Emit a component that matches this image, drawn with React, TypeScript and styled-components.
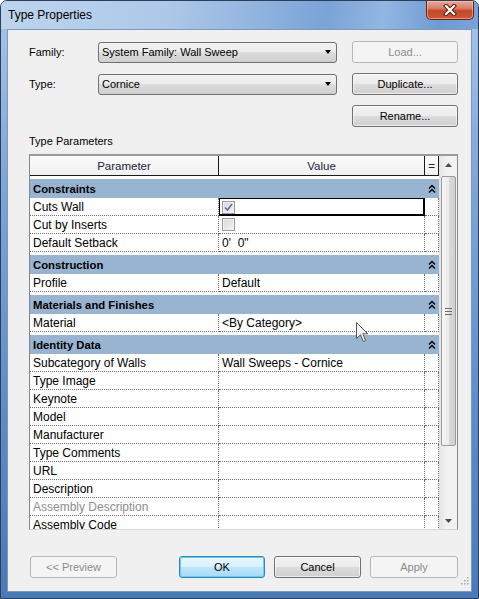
import React from "react";
import styled, { createGlobalStyle } from "styled-components";

const GlobalStyle = createGlobalStyle`
  html, body {
    margin: 0;
    padding: 0;
    background: #ffffff;
  }
  body {
    font-family: "Liberation Sans", Arial, sans-serif;
    color: #000;
  }
`;

const Window = styled.div`
  width: 479px;
  height: 599px;
  box-sizing: border-box;
  border: 1px solid #2d3f58;
  border-radius: 7px 7px 0 0;
  display: flex;
  flex-direction: column;
  overflow: hidden;
  background: linear-gradient(180deg, #a9c6e9 0%, #7fa6d8 30%, #5e8bc6 70%, #4a79b8 100%);
`;

const TitleBar = styled.div`
  height: 28px;
  flex: none;
  display: flex;
  justify-content: space-between;
  align-items: flex-start;
  padding-left: 7px;
  background: linear-gradient(
    95deg,
    #bdd4ed 0%,
    #adc8e9 35%,
    #8fb2de 55%,
    #7aa3d7 68%,
    #93b6e2 80%,
    #6f9bd3 92%,
    #7aa3d8 100%
  );
`;

const TitleText = styled.div`
  padding-top: 6px;
  font-size: 12px;
  line-height: 16px;
  color: #000;
`;

const CloseButton = styled.div`
  width: 48px;
  height: 19px;
  margin-right: 4px;
  box-sizing: border-box;
  border: 1px solid #6a2414;
  border-top: none;
  border-radius: 0 0 5px 5px;
  background: linear-gradient(180deg, #e9a898 0%, #d8806a 40%, #c2452a 55%, #cf5a3a 100%);
  box-shadow: inset 0 0 0 1px rgba(255, 210, 190, 0.5);
  display: flex;
  align-items: center;
  justify-content: center;
`;

const Client = styled.div`
  flex: 1;
  margin: 0 6px 6px 6px;
  border: 1px solid #7d98b9;
  background: #f0f0f0;
  padding: 11px 13px 0 21px;
  display: flex;
  flex-direction: column;
  position: relative;
`;

const FormGrid = styled.div`
  display: grid;
  grid-template-columns: 69px 239px 1fr;
  grid-auto-rows: 22px;
  row-gap: 10px;
  align-items: center;
  font-size: 11px;
`;

const Label = styled.div`
  font-size: 11px;
  line-height: 14px;
`;

const Combo = styled.div`
  height: 21px;
  box-sizing: border-box;
  border: 1px solid #707070;
  border-radius: 3px;
  background: linear-gradient(180deg, #f2f2f2 0%, #ebebeb 50%, #dddddd 50%, #cfcfcf 100%);
  display: flex;
  align-items: center;
  justify-content: space-between;
  padding: 0 5px 0 3px;
  font-size: 11px;
`;

const ComboArrow = styled.span`
  width: 0;
  height: 0;
  border-left: 3.5px solid transparent;
  border-right: 3.5px solid transparent;
  border-top: 4px solid #000;
`;

const Button = styled.div<{ $disabled?: boolean; $default?: boolean; $width?: number }>`
  width: ${(p) => p.$width ?? 106}px;
  height: 22px;
  box-sizing: border-box;
  justify-self: end;
  border-radius: 3px;
  display: flex;
  align-items: center;
  justify-content: center;
  font-size: 11px;
  border: 1px solid
    ${(p) => (p.$disabled ? "#b5b8bb" : p.$default ? "#3c7fb1" : "#707070")};
  color: ${(p) => (p.$disabled ? "#8c8c8c" : "#000")};
  background: ${(p) =>
    p.$disabled
      ? "#f4f4f4"
      : p.$default
      ? "linear-gradient(180deg, #eaf6fd 0%, #d9f0fc 50%, #bee6fd 50%, #a7d9f5 100%)"
      : "linear-gradient(180deg, #f2f2f2 0%, #ebebeb 50%, #dddddd 50%, #cfcfcf 100%)"};
  box-shadow: ${(p) =>
    p.$default ? "inset 0 0 0 1px #5fd0fb" : p.$disabled ? "none" : "inset 0 0 0 1px rgba(255,255,255,0.6)"};
`;

const RenameSlot = styled.div`
  grid-column: 3;
  display: flex;
  justify-content: flex-end;
`;

const SectionLabel = styled.div`
  margin-top: 7px;
  font-size: 11px;
  line-height: 14px;
`;

const Table = styled.div`
  margin-top: 6px;
  height: 376px;
  box-sizing: border-box;
  border: 1px solid #828790;
  border-top: 2px solid #9a9a9a;
  border-bottom-color: #d5d5d5;
  background: #fff;
  display: flex;
  position: relative;
`;

const Content = styled.div`
  flex: 1;
  overflow: hidden;
  font-size: 12px;
`;

const cols = "189px 206px 1fr";

const HeaderRow = styled.div`
  display: grid;
  grid-template-columns: ${cols};
  height: 20px;
  box-sizing: border-box;
  border-bottom: 1px solid #1a1a1a;
  background: linear-gradient(180deg, #fbfbfb 0%, #f0f0f0 100%);
`;

const HeaderCell = styled.div`
  display: flex;
  align-items: center;
  justify-content: center;
  border-right: 1px solid #1a1a1a;
  font-size: 11.5px;
  color: #1b2438;
`;

const GroupRow = styled.div`
  height: 22px;
  box-sizing: border-box;
  padding-top: 3px;
`;

const GroupBand = styled.div`
  height: 19px;
  display: grid;
  grid-template-columns: ${cols};
  align-items: center;
  background: #99b4d1;
`;

const GroupName = styled.div`
  grid-column: 1 / 3;
  padding-left: 3px;
  font-weight: bold;
  font-size: 11.3px;
`;

const GroupIcon = styled.div`
  display: flex;
  justify-content: center;
  padding-right: 1px;
`;

const Row = styled.div`
  display: grid;
  grid-template-columns: ${cols};
  height: 18px;
`;

const Cell = styled.div<{ $muted?: boolean; $selected?: boolean; $last?: boolean }>`
  box-sizing: border-box;
  display: flex;
  align-items: center;
  padding-left: ${(p) => (p.$last ? 0 : 3)}px;
  white-space: pre;
  overflow: hidden;
  border-bottom: 1px dotted #707070;
  border-right: 1px dotted #707070;
  color: ${(p) => (p.$muted ? "#8d8d8d" : "#000")};
  ${(p) =>
    p.$selected &&
    `
    border: 1px solid #000;
    box-shadow: inset -1px -1px 0 #000;
    padding-left: 2px;
  `}
`;

const CheckBox = styled.span`
  width: 13px;
  height: 13px;
  box-sizing: border-box;
  border: 1px solid #9a9a9a;
  background: linear-gradient(135deg, #d4d6da 0%, #f5f5f5 100%);
  box-shadow: inset 0 0 0 1px #f2f2f2;
  display: flex;
  align-items: center;
  justify-content: center;
`;

const ScrollBar = styled.div`
  width: 18px;
  flex: none;
  box-sizing: border-box;
  border-left: 1px solid #e2e2e2;
  background: linear-gradient(90deg, #e6e6e6 0%, #f2f2f2 40%, #f2f2f2 100%);
  display: flex;
  flex-direction: column;
  align-items: center;
`;

const ScrollArrow = styled.div`
  height: 17px;
  width: 100%;
  display: flex;
  align-items: center;
  justify-content: center;
`;

const Thumb = styled.div`
  width: 15px;
  height: 270px;
  margin-top: 3px;
  box-sizing: border-box;
  border: 1px solid #9b9b9b;
  border-radius: 2px;
  background: linear-gradient(90deg, #f6f6f6 0%, #ebebeb 50%, #dadada 55%, #d0d0d0 100%);
  display: flex;
  align-items: center;
  justify-content: center;
`;

const Spacer = styled.div`
  flex: 1;
`;

const Cursor = styled.div`
  position: absolute;
  left: 326px;
  top: 166px;
  pointer-events: none;
`;

const Footer = styled.div`
  margin-top: 26px;
  display: flex;
  padding-left: 1px;
`;

const FooterGap = styled.div<{ $w: number }>`
  width: ${(p) => p.$w}px;
  flex: none;
`;

const Grip = styled.div`
  position: absolute;
  right: 2px;
  bottom: 2px;
`;

type Param = {
  label: string;
  value?: string;
  check?: boolean;
  selected?: boolean;
  muted?: boolean;
};

const groups: { name: string; rows: Param[] }[] = [
  {
    name: "Constraints",
    rows: [
      { label: "Cuts Wall", check: true, selected: true },
      { label: "Cut by Inserts", check: false },
      { label: "Default Setback", value: "0'  0\"" },
    ],
  },
  { name: "Construction", rows: [{ label: "Profile", value: "Default" }] },
  { name: "Materials and Finishes", rows: [{ label: "Material", value: "<By Category>" }] },
  {
    name: "Identity Data",
    rows: [
      { label: "Subcategory of Walls", value: "Wall Sweeps - Cornice" },
      { label: "Type Image" },
      { label: "Keynote" },
      { label: "Model" },
      { label: "Manufacturer" },
      { label: "Type Comments" },
      { label: "URL" },
      { label: "Description" },
      { label: "Assembly Description", muted: true },
      { label: "Assembly Code" },
    ],
  },
];

const CollapseIcon = () => (
  <svg width="8" height="10" viewBox="0 0 8 10">
    <path d="M1 4.5 L4 1.5 L7 4.5 M1 8.5 L4 5.5 L7 8.5" fill="none" stroke="#000" strokeWidth="1.4" />
  </svg>
);

const CheckMark = () => (
  <svg width="9" height="9" viewBox="0 0 9 9">
    <path d="M1 4.5 L3.5 7 L8 1" fill="none" stroke="#5a6ea3" strokeWidth="1.5" />
  </svg>
);

export default function App() {
  return (
    <>
      <GlobalStyle />
      <Window>
        <TitleBar>
          <TitleText>Type Properties</TitleText>
          <CloseButton>
            <svg width="14" height="12" viewBox="0 0 14 12">
              <path d="M3 2 L11 10 M11 2 L3 10" stroke="#5a1a0e" strokeWidth="4.2" strokeLinecap="square" />
              <path d="M3 2 L11 10 M11 2 L3 10" stroke="#fff" strokeWidth="2.2" strokeLinecap="square" />
            </svg>
          </CloseButton>
        </TitleBar>
        <Client>
          <FormGrid>
            <Label>Family:</Label>
            <Combo>
              System Family: Wall Sweep
              <ComboArrow />
            </Combo>
            <Button $disabled>Load...</Button>
            <Label>Type:</Label>
            <Combo>
              Cornice
              <ComboArrow />
            </Combo>
            <Button>Duplicate...</Button>
            <RenameSlot>
              <Button>Rename...</Button>
            </RenameSlot>
          </FormGrid>

          <SectionLabel>Type Parameters</SectionLabel>

          <Table>
            <Content>
              <HeaderRow>
                <HeaderCell>Parameter</HeaderCell>
                <HeaderCell>Value</HeaderCell>
                <HeaderCell>=</HeaderCell>
              </HeaderRow>
              {groups.map((g) => (
                <React.Fragment key={g.name}>
                  <GroupRow>
                    <GroupBand>
                      <GroupName>{g.name}</GroupName>
                      <GroupIcon>
                        <CollapseIcon />
                      </GroupIcon>
                    </GroupBand>
                  </GroupRow>
                  {g.rows.map((r) => (
                    <Row key={r.label}>
                      <Cell $muted={r.muted}>{r.label}</Cell>
                      <Cell $selected={r.selected}>
                        {r.check !== undefined ? (
                          <CheckBox>{r.check && <CheckMark />}</CheckBox>
                        ) : (
                          r.value ?? ""
                        )}
                      </Cell>
                      <Cell $last />
                    </Row>
                  ))}
                </React.Fragment>
              ))}
            </Content>
            <ScrollBar>
              <ScrollArrow>
                <svg width="7" height="4" viewBox="0 0 7 4">
                  <path d="M0 4 L3.5 0 L7 4 Z" fill="#4a4a4a" />
                </svg>
              </ScrollArrow>
              <Thumb>
                <svg width="7" height="7" viewBox="0 0 7 7">
                  <path d="M0 0.5 H7 M0 3.5 H7 M0 6.5 H7" stroke="#6a6a6a" strokeWidth="1" />
                </svg>
              </Thumb>
              <Spacer />
              <ScrollArrow>
                <svg width="7" height="4" viewBox="0 0 7 4">
                  <path d="M0 0 L3.5 4 L7 0 Z" fill="#4a4a4a" />
                </svg>
              </ScrollArrow>
            </ScrollBar>
            <Cursor>
              <svg width="13" height="21" viewBox="0 0 13 21">
                <path
                  d="M0.5 0.5 L0.5 16.5 L4.5 12.8 L7.3 19.5 L9.6 18.5 L6.8 11.8 L11.8 11.8 Z"
                  fill="#f4f4f4"
                  stroke="#555"
                  strokeWidth="1"
                />
              </svg>
            </Cursor>
          </Table>

          <Footer>
            <Button $disabled $width={87}>
              &lt;&lt; Preview
            </Button>
            <Spacer />
            <Button $default $width={86}>
              OK
            </Button>
            <FooterGap $w={9} />
            <Button $width={87}>Cancel</Button>
            <FooterGap $w={9} />
            <Button $disabled $width={88}>
              Apply
            </Button>
          </Footer>
          <Grip>
            <svg width="10" height="10" viewBox="0 0 10 10">
              <g fill="#a8a8a8">
                <rect x="8" y="2" width="1.5" height="1.5" />
                <rect x="5" y="5" width="1.5" height="1.5" />
                <rect x="8" y="5" width="1.5" height="1.5" />
                <rect x="2" y="8" width="1.5" height="1.5" />
                <rect x="5" y="8" width="1.5" height="1.5" />
                <rect x="8" y="8" width="1.5" height="1.5" />
              </g>
            </svg>
          </Grip>
        </Client>
      </Window>
    </>
  );
}
